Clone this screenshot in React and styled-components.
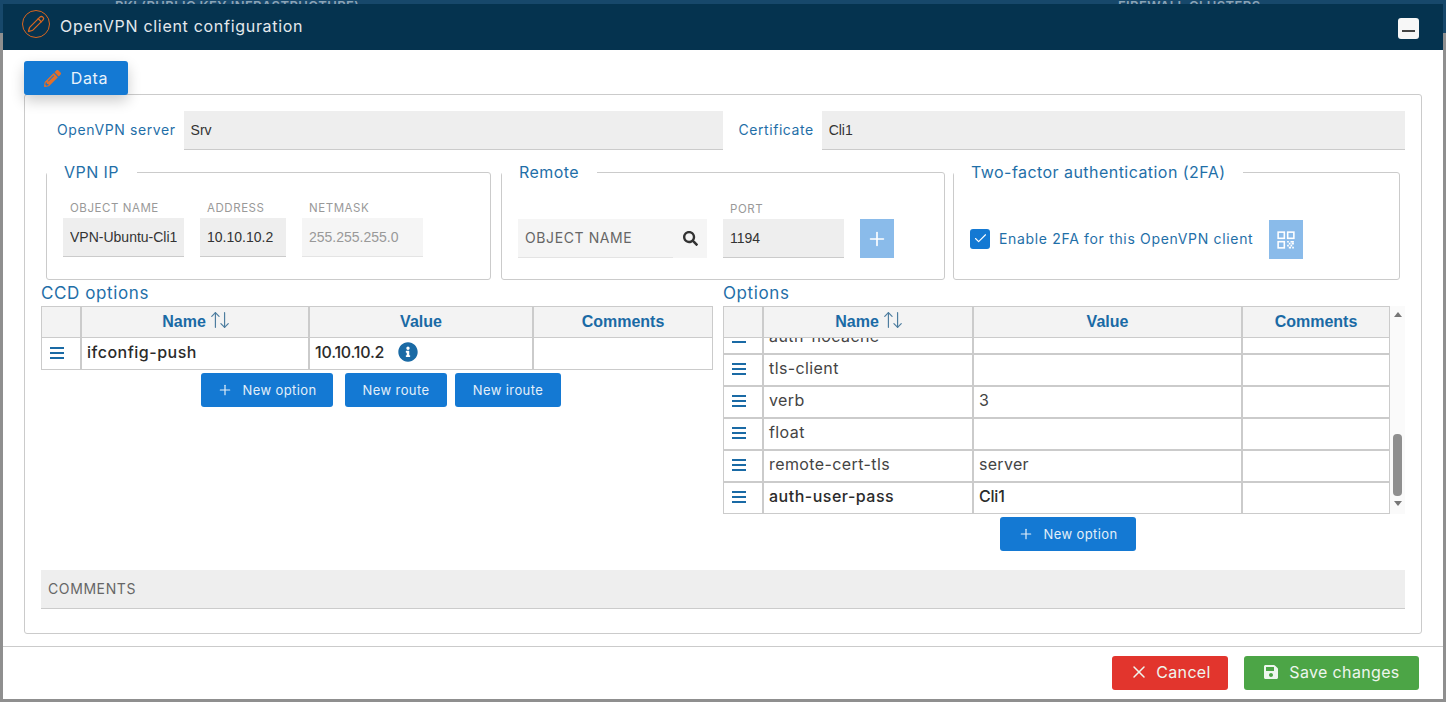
import React from "react";
import styled, { createGlobalStyle } from "styled-components";
import { FaPencilAlt, FaSave, FaInfoCircle, FaSearch } from "react-icons/fa";
import { ArrowUpDown, Pencil, Plus, X, Check } from "lucide-react";

const BLUE = "#1479d3";
const TEXT_BLUE = "#1f6fa8";
const LINE = "#cbcbcb";
const SANS = `Inter, "Open Sans", sans-serif`;
const ARIAL = `"Liberation Sans", Arial, sans-serif`;

const GlobalStyle = createGlobalStyle`
  html, body {
    margin: 0;
    padding: 0;
    background: #8f8f8f;
    overflow: hidden;
  }
  * {
    box-sizing: border-box;
  }
`;

const Backdrop = styled.div`
  position: relative;
  width: 1446px;
  height: 702px;
  overflow: hidden;
  background: #8f8f8f;
`;

const BackdropBar = styled.div`
  display: flex;
  height: 33px;
  background: #17486b;
  color: #8aa3b6;
  font: 600 13px/13px ${SANS};
  letter-spacing: 0.4px;
`;

const BackdropCell = styled.div`
  flex: 0 0 ${(p) => p.$width}px;
  padding-left: ${(p) => p.$indent}px;
  white-space: nowrap;
`;

const Dialog = styled.div`
  position: absolute;
  top: 4px;
  left: 3px;
  width: 1440px;
  height: 695px;
  display: flex;
  flex-direction: column;
  background: #fff;
`;

const Header = styled.header`
  height: 46px;
  flex: none;
  display: flex;
  align-items: center;
  padding: 0 24px 0 19px;
  background: #05334f;
  color: #e4e9ed;
`;

const HeaderBadge = styled.span`
  width: 28px;
  height: 28px;
  flex: none;
  display: flex;
  align-items: center;
  justify-content: center;
  margin-top: -6px;
  border: 1px solid #d9661f;
  border-radius: 50%;
  color: #d9661f;
`;

const HeaderTitle = styled.h1`
  margin: -2px 0 0 10px;
  font: 400 16px ${SANS};
  letter-spacing: 0.7px;
  flex: 1;
`;

const MinimizeButton = styled.button`
  width: 21px;
  height: 21px;
  padding: 0;
  margin-top: 2px;
  border: 0;
  border-radius: 3px;
  background: #f7f7f7;
  display: flex;
  align-items: center;
  justify-content: center;
  &::before {
    content: "";
    width: 13px;
    height: 2px;
    margin-top: 5px;
    background: #444;
  }
`;

const Body = styled.div`
  flex: 1;
  padding: 11px 21px 12px;
  display: flex;
  flex-direction: column;
`;

const DataTab = styled.button`
  align-self: flex-start;
  position: relative;
  z-index: 1;
  width: 104px;
  height: 34px;
  flex: none;
  display: flex;
  align-items: center;
  justify-content: center;
  gap: 10px;
  padding: 0;
  border: 0;
  border-radius: 3px;
  background: ${BLUE};
  color: #e8f2fb;
  font: 400 16px ${SANS};
  letter-spacing: 0.7px;
  box-shadow: 0 6px 14px rgba(0, 0, 0, 0.2);
  svg {
    color: #e2702a;
  }
`;

const Panel = styled.section`
  flex: 1;
  margin-top: -1px;
  padding: 16px 16px 0;
  border: 1px solid ${LINE};
  border-radius: 3px;
  display: flex;
  flex-direction: column;
`;

const TopRow = styled.div`
  display: flex;
  align-items: center;
  height: 39px;
  padding-left: 16px;
`;

const TopLabel = styled.label`
  flex: none;
  margin: 0 8px 2px ${(p) => p.$offset || 0}px;
  color: ${TEXT_BLUE};
  font: 400 14px ${SANS};
  letter-spacing: ${(p) => p.$spacing || 0.6}px;
`;

const Field = styled.input`
  display: block;
  width: ${(p) => (p.$width ? `${p.$width}px` : "auto")};
  flex: ${(p) => (p.$width ? "none" : p.$grow || 1)};
  min-width: 0;
  height: 39px;
  padding: 0 7px;
  border: 0;
  border-bottom: 1px solid ${LINE};
  border-radius: 0;
  outline: none;
  background: #eee;
  color: #333;
  font: 400 14px ${ARIAL};
  &:disabled {
    background: #f5f5f5;
    border-bottom-color: #e4e4e4;
    color: #999;
  }
  &::placeholder {
    color: #666;
    opacity: 1;
    font: 400 14px ${SANS};
    letter-spacing: 0.6px;
  }
`;

const GroupRow = styled.div`
  display: flex;
  margin: 12px 5px 0;
  gap: ${(p) => p.$gap || 10}px;
`;

const Group = styled.fieldset`
  flex: 0 0 ${(p) => p.$width}px;
  margin: 0 ${(p) => p.$after || 0}px 0 0;
  height: 118px;
  padding: 0 16px;
  min-width: 0;
  border: 1px solid ${LINE};
  border-radius: 3px;
`;

const GroupTitle = styled.legend`
  padding: 0 18px 0 17px;
  margin-left: -16px;
  color: ${TEXT_BLUE};
  font: 400 16px/20px ${SANS};
  letter-spacing: 0.45px;
`;

const GroupBody = styled.div`
  display: flex;
  align-items: flex-end;
  gap: 16px;
  padding-top: ${(p) => p.$top}px;
`;

const Stack = styled.div`
  display: flex;
  flex-direction: column;
`;

const SmallLabel = styled.label`
  padding-left: 7px;
  margin-bottom: 3px;
  color: #999;
  font: 400 11.5px/14px ${SANS};
  letter-spacing: 0.55px;
`;

const SearchField = styled.div`
  display: flex;
  width: 189px;
  height: 39px;
`;

const SearchButton = styled.span`
  flex: 0 0 34px;
  display: flex;
  align-items: center;
  justify-content: center;
  background: #f5f5f5;
  color: #333;
`;

const SquareButton = styled.button`
  width: 34px;
  height: 39px;
  padding: 0;
  border: 0;
  display: flex;
  align-items: center;
  justify-content: center;
  background: #8abbea;
  color: #fff;
`;

const TwoFaRow = styled.div`
  display: flex;
  align-items: center;
  height: 39px;
  margin: 38px 0 0 0;
`;

const CheckBox = styled.span`
  width: 20px;
  height: 20px;
  flex: none;
  margin-bottom: 2px;
  display: flex;
  align-items: center;
  justify-content: center;
  border-radius: 3px;
  background: ${BLUE};
  color: #fff;
`;

const TwoFaLabel = styled.span`
  margin: 0 16px 2px 9px;
  color: ${TEXT_BLUE};
  font: 400 14px ${SANS};
  letter-spacing: 0.67px;
  white-space: nowrap;
`;

const TablesRow = styled.div`
  display: flex;
  gap: 10px;
  height: 287px;
  margin-top: 3px;
`;

const TableColumn = styled.div`
  flex: 0 0 ${(p) => p.$width}px;
  display: flex;
  flex-direction: column;
`;

const TableTitle = styled.h2`
  margin: 0;
  height: 23px;
  color: ${TEXT_BLUE};
  font: 400 17px/20px ${SANS};
  letter-spacing: 0.6px;
`;

const TableFrame = styled.div`
  display: flex;
`;

const Table = styled.div`
  flex: 1;
  min-width: 0;
  border: solid ${LINE};
  border-width: 1px;
  border-bottom: 0;
`;

const Row = styled.div`
  display: grid;
  grid-template-columns: ${(p) => p.$cols};
  height: ${(p) => p.$height || 32}px;
  border-bottom: ${(p) => (p.$thin ? 1 : 2)}px solid ${LINE};
  background: #fff;
`;

const HeadRow = styled(Row)`
  position: relative;
  z-index: 1;
  background: #f3f3f3;
  height: 31px;
  border-bottom-width: 1px;
`;

const HeadCell = styled.div`
  display: flex;
  align-items: center;
  justify-content: center;
  gap: 3px;
  color: #1a6aa5;
  font: 700 16px ${ARIAL};
  border-right: 2px solid ${LINE};
  &:last-child {
    border-right: 0;
  }
  svg {
    margin: -4px -3px 0 0;
  }
`;

const Cell = styled.div`
  display: flex;
  align-items: center;
  gap: 14px;
  min-width: 0;
  padding: 0 5px 4px;
  color: ${(p) => (p.$strong ? "#2b2b2b" : "#444")};
  font: ${(p) => (p.$strong ? 450 : 400)} 16px ${SANS};
  letter-spacing: ${(p) => p.$spacing ?? 0.4}px;
  white-space: nowrap;
  border-right: 2px solid ${LINE};
  &:last-child {
    border-right: 0;
  }
`;

const HandleCell = styled(Cell)`
  justify-content: center;
  padding: 0 8px 2px 0;
`;

const Handle = styled.span`
  display: block;
  width: 14px;
  height: 12px;
  border-top: 2px solid #1a6aa5;
  border-bottom: 2px solid #1a6aa5;
  position: relative;
  &::after {
    content: "";
    position: absolute;
    left: 0;
    right: 0;
    top: 3px;
    height: 2px;
    background: #1a6aa5;
  }
`;

const InfoIcon = styled(FaInfoCircle)`
  color: #1a6aa5;
`;

const ScrollBody = styled.div`
  height: 176px;
  overflow: hidden;
`;

const ClippedRows = styled.div`
  margin-top: -15px;
`;

const Scrollbar = styled.div`
  flex: 0 0 15px;
  display: flex;
  flex-direction: column;
  align-items: center;
  background: #fafafa;
  padding: 6px 0;
`;

const ArrowUp = styled.span`
  border: solid transparent;
  border-width: 0 4px 5px;
  border-bottom-color: #777;
`;

const ArrowDown = styled.span`
  border: solid transparent;
  border-width: 5px 4px 0;
  border-top-color: #777;
`;

const Thumb = styled.span`
  width: 9px;
  height: 62px;
  margin: 117px 0 5px;
  border-radius: 4px;
  background: #8f8f8f;
`;

const ActionRow = styled.div`
  display: flex;
  gap: ${(p) => p.$gap || 12}px;
  margin-top: 3px;
  padding-left: ${(p) => p.$indent || 0}px;
`;

const ActionButton = styled.button`
  width: ${(p) => p.$width}px;
  height: 34px;
  margin-right: ${(p) => p.$after || 0}px;
  padding: 0;
  border: 0;
  border-radius: 3px;
  display: flex;
  align-items: center;
  justify-content: center;
  gap: 9px;
  background: ${BLUE};
  color: #e3eff9;
  font: 400 13px ${SANS};
  letter-spacing: 0.4px;
`;

const CommentsField = styled(Field)`
  flex: none;
  width: 100%;
`;

const Footer = styled.footer`
  height: 53px;
  flex: none;
  display: flex;
  justify-content: flex-end;
  gap: 16px;
  padding: 9px 24px 0 0;
  border-top: 1px solid ${LINE};
`;

const FooterButton = styled.button`
  width: ${(p) => p.$width}px;
  height: 34px;
  padding: 0 0 ${(p) => p.$lift || 0}px;
  border: 0;
  border-radius: 3px;
  display: flex;
  align-items: center;
  justify-content: center;
  gap: ${(p) => p.$gap}px;
  background: ${(p) => p.$color};
  color: #eef6ee;
  font: 400 16px ${SANS};
  letter-spacing: 0.35px;
`;

const CCD_COLS = "40px 228px 224px 1fr";
const OPTION_COLS = "40px 210px 269px 1fr";

const optionRows = [
  { name: "auth-nocache", value: "" },
  { name: "tls-client", value: "" },
  { name: "verb", value: "3" },
  { name: "float", value: "" },
  { name: "remote-cert-tls", value: "server", spacing: 0.3 },
  { name: "auth-user-pass", value: "Cli1", strong: true, spacing: -0.2 },
];

// the pack icons have no close match for this little QR glyph
function QrIcon() {
  return (
    <svg width="18" height="18" viewBox="0 0 16 16" fill="none" stroke="#fff" strokeWidth="1.4">
      <rect x="1" y="1" width="5.5" height="5.5" />
      <rect x="9.5" y="1" width="5.5" height="5.5" />
      <rect x="1" y="9.5" width="5.5" height="5.5" />
      <path d="M9 9.5h1.5M12 9.5h3M10.5 11.2h1.5M13 11.2h2M9 13h1.5M12 13h1.5M10.5 14.8h2M13.5 14.8h1.5" />
    </svg>
  );
}

function TableHead({ cols }) {
  return (
    <HeadRow $cols={cols}>
      <HeadCell />
      <HeadCell>
        Name
        <ArrowUpDown size={22} strokeWidth={1.3} color="#4d7d9f" />
      </HeadCell>
      <HeadCell>Value</HeadCell>
      <HeadCell>Comments</HeadCell>
    </HeadRow>
  );
}

function OptionRow({ cols, name, value, strong, info, thin, spacing }) {
  return (
    <Row $cols={cols} $thin={thin}>
      <HandleCell>
        <Handle />
      </HandleCell>
      <Cell $strong={strong} $spacing={strong ? 0.5 : 0.4}>{name}</Cell>
      <Cell $strong={strong} $spacing={spacing}>
        {value}
        {info && <InfoIcon size={20} />}
      </Cell>
      <Cell />
    </Row>
  );
}

export default function App() {
  return (
    <Backdrop>
      <GlobalStyle />
      <BackdropBar>
        <BackdropCell $width={722} $indent={115}>PKI (PUBLIC KEY INFRASTRUCTURE)</BackdropCell>
        <BackdropCell $width={724} $indent={396}>FIREWALL CLUSTERS</BackdropCell>
      </BackdropBar>
      <Dialog>
        <Header>
          <HeaderBadge>
            <Pencil size={18} strokeWidth={1.7} />
          </HeaderBadge>
          <HeaderTitle>OpenVPN client configuration</HeaderTitle>
          <MinimizeButton aria-label="Minimize" />
        </Header>
        <Body>
          <DataTab>
            <FaPencilAlt size={17} />
            Data
          </DataTab>
          <Panel>
            <TopRow>
              <TopLabel>OpenVPN server</TopLabel>
              <Field readOnly value="Srv" $width={539} />
              <TopLabel $offset={16} $spacing={0.55}>Certificate</TopLabel>
              <Field readOnly value="Cli1" />
            </TopRow>
            <GroupRow>
              <Group $width={445}>
                <GroupTitle>VPN IP</GroupTitle>
                <GroupBody $top={19}>
                  <Stack>
                    <SmallLabel>OBJECT NAME</SmallLabel>
                    <Field readOnly value="VPN-Ubuntu-Cli1" $width={121} />
                  </Stack>
                  <Stack>
                    <SmallLabel>ADDRESS</SmallLabel>
                    <Field readOnly value="10.10.10.2" $width={86} />
                  </Stack>
                  <Stack>
                    <SmallLabel>NETMASK</SmallLabel>
                    <Field disabled value="255.255.255.0" $width={121} />
                  </Stack>
                </GroupBody>
              </Group>
              <Group $width={444} $after={-2}>
                <GroupTitle>Remote</GroupTitle>
                <GroupBody $top={20}>
                  <SearchField>
                    <Field disabled placeholder="OBJECT NAME" />
                    <SearchButton>
                      <FaSearch size={15} />
                    </SearchButton>
                  </SearchField>
                  <Stack>
                    <SmallLabel>PORT</SmallLabel>
                    <Field readOnly value="1194" $width={121} />
                  </Stack>
                  <SquareButton aria-label="Add">
                    <Plus size={22} strokeWidth={1.8} />
                  </SquareButton>
                </GroupBody>
              </Group>
              <Group $width={447}>
                <GroupTitle>Two-factor authentication (2FA)</GroupTitle>
                <TwoFaRow>
                  <CheckBox>
                    <Check size={15} strokeWidth={1.8} />
                  </CheckBox>
                  <TwoFaLabel>Enable 2FA for this OpenVPN client</TwoFaLabel>
                  <SquareButton aria-label="Show QR code">
                    <QrIcon />
                  </SquareButton>
                </TwoFaRow>
              </Group>
            </GroupRow>
            <TablesRow>
              <TableColumn $width={672}>
                <TableTitle>CCD options</TableTitle>
                <TableFrame>
                  <Table>
                    <TableHead cols={CCD_COLS} />
                    <OptionRow cols={CCD_COLS} name="ifconfig-push" value="10.10.10.2" strong info thin spacing={-0.2} />
                  </Table>
                </TableFrame>
                <ActionRow $indent={160}>
                  <ActionButton $width={132}>
                    <Plus size={16} strokeWidth={1.8} />
                    New option
                  </ActionButton>
                  <ActionButton $width={102} $after={-4}>New route</ActionButton>
                  <ActionButton $width={106}>New iroute</ActionButton>
                </ActionRow>
              </TableColumn>
              <TableColumn $width={682}>
                <TableTitle>Options</TableTitle>
                <TableFrame>
                  <Table>
                    <TableHead cols={OPTION_COLS} />
                    <ScrollBody>
                      <ClippedRows>
                        {optionRows.map((row) => (
                          <OptionRow key={row.name} cols={OPTION_COLS} {...row} />
                        ))}
                      </ClippedRows>
                    </ScrollBody>
                  </Table>
                  <Scrollbar>
                    <ArrowUp />
                    <Thumb />
                    <ArrowDown />
                  </Scrollbar>
                </TableFrame>
                <ActionRow $indent={277}>
                  <ActionButton $width={136}>
                    <Plus size={16} strokeWidth={1.8} />
                    New option
                  </ActionButton>
                </ActionRow>
              </TableColumn>
            </TablesRow>
            <CommentsField readOnly placeholder="COMMENTS" />
          </Panel>
        </Body>
        <Footer>
          <FooterButton $width={116} $color="#e2352d" $gap={7} $lift={2}>
            <X size={20} strokeWidth={1.8} />
            Cancel
          </FooterButton>
          <FooterButton $width={175} $color="#4ca546" $gap={10} $lift={2}>
            <FaSave size={16} />
            Save changes
          </FooterButton>
        </Footer>
      </Dialog>
    </Backdrop>
  );
}
